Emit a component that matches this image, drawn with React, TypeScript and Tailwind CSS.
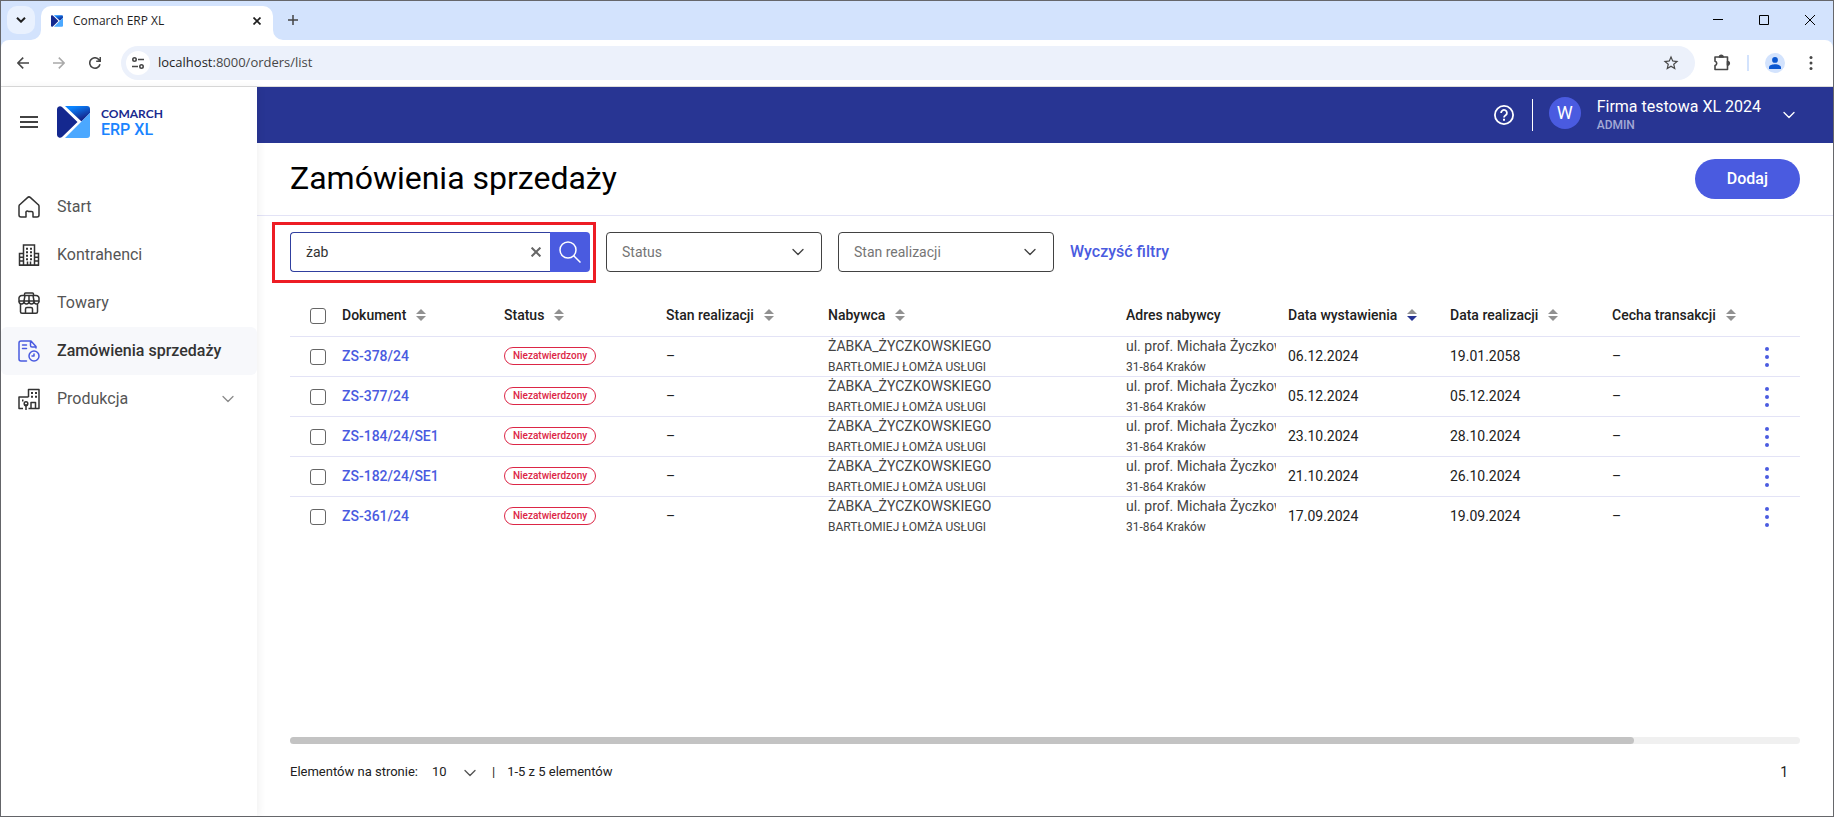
import React, { useState } from "react";
import { ChevronDown } from "lucide-react";

type IconProps = { className?: string };

type Order = {
  id: string;
  issued: string;
  due: string;
};

const orders: Order[] = [
  { id: "ZS-378/24", issued: "06.12.2024", due: "19.01.2058" },
  { id: "ZS-377/24", issued: "05.12.2024", due: "05.12.2024" },
  { id: "ZS-184/24/SE1", issued: "23.10.2024", due: "28.10.2024" },
  { id: "ZS-182/24/SE1", issued: "21.10.2024", due: "26.10.2024" },
  { id: "ZS-361/24", issued: "17.09.2024", due: "19.09.2024" },
];

const columns = [
  { label: "Dokument", sort: "none", width: "w-[162px]" },
  { label: "Status", sort: "none", width: "w-[162px]" },
  { label: "Stan realizacji", sort: "none", width: "w-[162px]" },
  { label: "Nabywca", sort: "none", width: "w-[298px]" },
  { label: "Adres nabywcy", sort: "", width: "w-[162px]" },
  { label: "Data wystawienia", sort: "desc", width: "w-[162px]" },
  { label: "Data realizacji", sort: "none", width: "w-[162px]" },
  { label: "Cecha transakcji", sort: "none", width: "" },
];

const LogoMark = ({ className }: IconProps) => (
  <svg viewBox="0 0 33 32" className={className} aria-hidden="true">
    <defs>
      <linearGradient id="logoTop" x1="0" y1="0" x2="0.6" y2="1">
        <stop offset="0.2" stopColor="#0a84ff" />
        <stop offset="0.9" stopColor="#14288f" />
      </linearGradient>
    </defs>
    <path d="M8 0h22a3 3 0 0 1 3 3v4L24.500 15.500z" fill="url(#logoTop)" />
    <path d="M33 7v22a3 3 0 0 1-3 3H8l16.500-16.500z" fill="#4ba8ff" />
    <path d="M0 3a3 3 0 0 1 5-2l15.500 15L5 31a3 3 0 0 1-5-2z" fill="#14288f" />
  </svg>
);

const HomeIcon = () => (
  <svg viewBox="0 0 22 22" className="size-[22px]" fill="none" stroke="currentColor" strokeWidth="1.5" strokeLinejoin="round">
    <path d="M1 10.200c0-.6.2-1.100.7-1.500l7.800-7.100a2.200 2.200 0 0 1 3 0l7.800 7.100c.5.400.7.900.7 1.500V19a2 2 0 0 1-2 2h-4v-4a1.500 1.500 0 0 0-1.500-1.500h-3A1.500 1.500 0 0 0 8 17v4H3a2 2 0 0 1-2-2z" />
  </svg>
);

const OfficeIcon = () => (
  <svg viewBox="0 0 22 22" className="size-[22px]" fill="none" stroke="currentColor" strokeWidth="1.5">
    <path d="M5.500 21V1h11v20M5.500 9.500h-4V21h19V9.500h-4M1 21.200h20" />
    <path d="M8 4.800h2M12 4.800h2M8 8.300h2M12 8.300h2M8 11.800h2M12 11.800h2M8 15.300h2M12 15.300h2" strokeWidth="2" />
    <path d="M1.500 13.300h4M1.500 17h4M16.500 13.300h4M16.500 17h4M9.500 21v-3.500M12.500 21v-3.500" />
  </svg>
);

const StoreIcon = () => (
  <svg viewBox="0 0 22 22" className="size-[22px]" fill="none" stroke="currentColor" strokeWidth="1.5" strokeLinejoin="round">
    <path d="M6.500 3.500V2a1 1 0 0 1 1-1h7a1 1 0 0 1 1 1v1.500M4 3.500h14a3 3 0 0 1 3 3.500v2H1V7a3 3 0 0 1 3-3.500zM6 9l1-5.500M16 9l-1-5.500M11 3.500V10" />
    <path d="M1 9a2.500 3 0 0 0 5 0 2.500 3 0 0 0 5 0 2.500 3 0 0 0 5 0 2.500 3 0 0 0 5 0" />
    <path d="M2.500 12V19.700a1.500 1.500 0 0 0 1.500 1.500h14a1.500 1.500 0 0 0 1.500-1.500V12M7.500 21v-4a1.500 1.500 0 0 1 1.500-1.500h4a1.500 1.500 0 0 1 1.500 1.500v4" />
  </svg>
);

const OrdersIcon = () => (
  <svg viewBox="0 0 22 22" className="size-[22px]" fill="none" stroke="#4a5be0" strokeWidth="1.5" strokeLinecap="round" strokeLinejoin="round">
    <path d="M8.500 21H3a2 2 0 0 1-2-2V3a2 2 0 0 1 2-2h10l5 5.500V8M12.500 1v4.500a1.500 1.500 0 0 0 1.500 1.500h4" />
    <path d="M4.500 5h4M4.500 8.500h4" />
    <circle cx="16" cy="16" r="5" />
    <path d="M16 14v2h-2" />
  </svg>
);

const FactoryIcon = () => (
  <svg viewBox="0 0 22 22" className="size-[22px]" fill="none" stroke="currentColor" strokeWidth="1.5" strokeLinejoin="round">
    <path d="M10.500 9V1.500h10.500V20.500H10.500M10.500 9H1v11.500h4" />
    <path d="M13 5h2M17 5h2M13 8.800h2M17 8.800h2M4 12.500h1.500" strokeWidth="2" />
    <path d="M8 16v6" />
    <path d="M6.200 15.500a1.800 1.800 0 0 1 3.600 0c0 1.200-.8 2.200-1.800 2.200s-1.800-1-1.800-2.200zM13 20.500v-6h4.500v6" />
  </svg>
);

const SortIcon = ({ active }: { active: boolean }) => (
  <svg viewBox="0 0 10 12" className="h-3 w-2.5 shrink-0" aria-hidden="true">
    <path d="M5 0l5 5H0z" fill="#919191" />
    <path d="M5 12l5-5H0z" fill={active ? "#283593" : "#919191"} />
  </svg>
);

const navItems = [
  { label: "Start", icon: <HomeIcon /> },
  { label: "Kontrahenci", icon: <OfficeIcon /> },
  { label: "Towary", icon: <StoreIcon /> },
  { label: "Zamówienia sprzedaży", icon: <OrdersIcon />, active: true },
  { label: "Produkcja", icon: <FactoryIcon />, expandable: true },
];

const BrowserChrome = () => (
  <div className="font-['Open_Sans',sans-serif] text-[#1f1f1f]">
    {/* Tab strip */}
    <div className="flex h-[39px] items-end bg-[#d3e3fd]">
      <button aria-label="Szukaj kart" className="mb-1.5 ml-1.5 flex size-7 items-center justify-center rounded-[10px] bg-[#e9f1fe]">
        <svg viewBox="0 0 10 6" className="h-1.5 w-2.5" fill="none" stroke="currentColor" strokeWidth="2">
          <path d="M1 .7l4 4 4-4" />
        </svg>
      </button>
      <div className="relative ml-1.5 flex h-[34px] w-[232px] items-center rounded-t-[10px] bg-white pr-3 pl-2.5">
        <svg viewBox="0 0 10 10" className="absolute bottom-0 -left-2.5 size-2.5" fill="white">
          <path d="M10 0v10H0A10 10 0 0 0 10 0" />
        </svg>
        <svg viewBox="0 0 10 10" className="absolute -right-2.5 bottom-0 size-2.5" fill="white">
          <path d="M0 0v10h10A10 10 0 0 1 0 0" />
        </svg>
        <LogoMark className="mb-1 h-3 w-3" />
        <span className="mb-1 ml-2.5 flex-1 text-xs">Comarch ERP XL</span>
        <button aria-label="Zamknij kartę" className="mb-1">
          <svg viewBox="0 0 8 8" className="size-2" fill="none" stroke="currentColor" strokeWidth="1.7">
            <path d="M.5.500l7 7M7.500.500l-7 7" />
          </svg>
        </button>
      </div>
      <button aria-label="Nowa karta" className="mb-[15px] ml-[15px]">
        <svg viewBox="0 0 10 10" className="size-2.5" fill="none" stroke="#444" strokeWidth="1.5">
          <path d="M5 0v10M0 5h10" />
        </svg>
      </button>
      <div className="mr-[18px] mb-[15px] ml-auto flex items-center gap-9 text-black">
        <button aria-label="Minimalizuj">
          <svg viewBox="0 0 10 10" className="size-2.5" stroke="currentColor">
            <path d="M0 4.500h10" />
          </svg>
        </button>
        <button aria-label="Maksymalizuj">
          <svg viewBox="0 0 10 10" className="size-2.5" fill="none" stroke="currentColor">
            <path d="M.5.500h9v9h-9z" />
          </svg>
        </button>
        <button aria-label="Zamknij">
          <svg viewBox="0 0 10 10" className="size-2.5" fill="none" stroke="currentColor">
            <path d="M0 0l10 10M10 0L0 10" />
          </svg>
        </button>
      </div>
    </div>

    {/* Address bar */}
    <div className="bg-[#d3e3fd]">
      <div className="flex h-[47px] items-center rounded-t-lg border-b border-[#dcdcdc] bg-white pr-5 pl-4 text-[#474747]">
        <button aria-label="Wstecz">
          <svg viewBox="0 0 12 12" className="size-3" fill="none" stroke="currentColor" strokeWidth="1.6">
            <path d="M12 6H1M6.200.600L.8 6l5.400 5.400" />
          </svg>
        </button>
        <button aria-label="Dalej" className="ml-6 text-[#a9a9a9]">
          <svg viewBox="0 0 12 12" className="size-3" fill="none" stroke="currentColor" strokeWidth="1.6">
            <path d="M0 6h11M5.800.600L11.200 6l-5.400 5.400" />
          </svg>
        </button>
        <button aria-label="Odśwież" className="ml-6">
          <svg viewBox="0 0 12 12" className="size-3" fill="none" stroke="currentColor" strokeWidth="1.6">
            <path d="M11 7.200A5.200 5.200 0 1 1 10 2.700l1.200 1.500M11.300 0v4.300H7.200" />
          </svg>
        </button>
        <div className="ml-5 flex h-[34px] flex-1 items-center rounded-full bg-[#ecf1fb] pr-[15px] pl-[5px]">
          <span className="flex size-6 items-center justify-center rounded-full bg-white">
            <svg viewBox="0 0 12 12" className="size-3" fill="none" stroke="currentColor" strokeWidth="1.6">
              <circle cx="2.500" cy="2.500" r="1.700" />
              <path d="M6 2.500h6M0 9.500h6" />
              <circle cx="9.500" cy="9.500" r="1.700" />
            </svg>
          </span>
          <span className="ml-2 text-[13px] text-[#474747]">
            <span className="text-[#1f1f1f]">localhost</span>:8000/orders/list
          </span>
          <button aria-label="Dodaj do zakładek" className="ml-auto">
            <svg viewBox="0 0 24 24" className="size-[18px]" fill="currentColor">
              <path d="M22 9.240l-7.190-.62L12 2 9.190 8.630 2 9.240l5.460 4.730L5.820 21 12 17.270 18.180 21l-1.630-7.030zM12 15.400l-3.760 2.270 1-4.280-3.320-2.880 4.380-.38L12 6.100l1.710 4.040 4.380.38-3.320 2.880 1 4.280z" />
            </svg>
          </button>
        </div>
        <button aria-label="Rozszerzenia" className="ml-[18px]">
          <svg viewBox="0 0 18 18" className="size-[18px]" fill="none" stroke="currentColor" strokeWidth="1.600" strokeLinejoin="round">
            <path d="M2 3h12.500v12.500H2v-4a2.200 2.200 0 0 0 0-4.300z" />
            <path d="M6.500 3a1.800 1.800 0 0 1 3.600 0zM14.500 7.500a1.800 1.800 0 0 1 0 3.600z" fill="currentColor" />
          </svg>
        </button>
        <span className="ml-4 h-4 w-0.5 bg-[#d3e3fd]" />
        <button aria-label="Profil" className="ml-4 flex size-5 items-center justify-center rounded-full bg-[#d3e3fd]">
          <svg viewBox="0 0 12 12" className="size-3" fill="#0b57d0">
            <circle cx="6" cy="2.900" r="2.900" />
            <path d="M0 12V10.200C0 8 4 7.200 6 7.200s6 .8 6 3V12z" />
          </svg>
        </button>
        <button aria-label="Menu" className="ml-6">
          <svg viewBox="0 0 4 14" className="h-3.5 w-1" fill="currentColor">
            <circle cx="2" cy="1.600" r="1.500" />
            <circle cx="2" cy="7" r="1.500" />
            <circle cx="2" cy="12.400" r="1.500" />
          </svg>
        </button>
      </div>
    </div>
  </div>
);

const Sidebar = () => (
  <aside className="z-10 w-64 shrink-0 bg-white shadow-[2px_0_8px_rgba(0,0,0,0.06)]">
    <div className="flex h-[70px] items-center pl-[19px]">
      <button aria-label="Menu główne">
        <svg viewBox="0 0 18 12" className="h-3 w-[18px]" stroke="#424242" strokeWidth="2">
          <path d="M0 1h18M0 6h18M0 11h18" />
        </svg>
      </button>
      <LogoMark className="ml-[19px] h-8 w-[33px]" />
      <div className="ml-[11px] font-['Lato',sans-serif]">
        <div className="text-xs leading-4 font-bold text-[#1a2b8f]">COMARCH</div>
        <div className="font-['Roboto',sans-serif] text-base leading-4 font-medium text-[#1a84ff]">ERP XL</div>
      </div>
    </div>
    <nav className="mt-[26px]">
      {navItems.map((item) => (
        <a
          key={item.label}
          href="#"
          className={`flex h-12 items-center rounded-md pr-[19px] pl-[17px] ${
            item.active ? "bg-[#f7f8fb] font-medium text-[#333]" : "text-[#555]"
          }`}
        >
          <span className="text-[#333]">{item.icon}</span>
          <span className="ml-[17px] flex-1">{item.label}</span>
          {item.expandable && <ChevronDown size={20} strokeWidth={1.5} className="text-[#8a8a8a]" />}
        </a>
      ))}
    </nav>
  </aside>
);

const TopBar = () => (
  <header className="flex h-14 items-center bg-[#283593] pr-[34px] text-white">
    <button aria-label="Pomoc" className="ml-auto">
      <svg viewBox="0 0 20 20" className="size-5" fill="none" stroke="currentColor" strokeWidth="1.800">
        <circle cx="10" cy="10" r="9.100" />
        <path d="M7.100 8a2.900 2.900 0 1 1 4.500 2.300c-1 .7-1.600 1.100-1.600 2.200" />
        <path d="M10 13.800v2" strokeWidth="2" />
      </svg>
    </button>
    <span className="ml-[18px] h-8 w-px bg-white" />
    <span className="mb-1 ml-4 flex size-8 items-center justify-center rounded-full bg-[#4a5be0] text-lg">W</span>
    <div className="ml-4">
      <div className="text-base leading-5">Firma testowa XL 2024</div>
      <div className="text-xs leading-4 font-medium text-[#a3a9d6]">ADMIN</div>
    </div>
    <button aria-label="Konto" className="ml-[18px]">
      <ChevronDown size={20} strokeWidth={1.6} />
    </button>
  </header>
);

const FilterSelect = ({ label }: { label: string }) => (
  <div className="relative">
    <select
      aria-label={label}
      className="h-10 w-[216px] appearance-none rounded border border-[#424242] bg-white px-[15px] text-sm text-[#757575] outline-none"
    >
      <option>{label}</option>
    </select>
    <ChevronDown size={20} strokeWidth={1.6} className="pointer-events-none absolute top-2.5 right-3.5 text-[#424242]" />
  </div>
);

const App: React.FC = () => {
  const [query, setQuery] = useState("żab");

  return (
    <div className="flex min-h-screen flex-col border border-[#66676b] bg-white font-['Roboto',sans-serif]">
      <BrowserChrome />
      <div className="flex flex-1">
        <Sidebar />
        <main className="flex min-w-0 flex-1 flex-col">
          <TopBar />

          {/* Page title */}
          <div className="flex h-[73px] items-center justify-between border-b border-[#e3e3f6] px-[33px]">
            <h1 className="pb-0.5 text-[32px] leading-10 text-black">Zamówienia sprzedaży</h1>
            <button className="h-10 rounded-full bg-[#4a5be0] px-8 text-base font-medium text-white">Dodaj</button>
          </div>

          <div className="flex flex-1 flex-col px-[33px] pt-4">
            {/* Filters */}
            <div className="flex items-center gap-4">
              <div className="relative flex">
                <input
                  type="text"
                  aria-label="Szukaj"
                  value={query}
                  onChange={(e) => setQuery(e.target.value)}
                  className="h-10 w-[260px] rounded-l border border-r-0 border-[#303f9f] pr-8 pl-[15px] text-sm text-[#333] outline-none"
                />
                <button aria-label="Wyczyść" onClick={() => setQuery("")} className="absolute top-[15px] right-[49px]">
                  <svg viewBox="0 0 10 10" className="size-2.5" fill="none" stroke="#666" strokeWidth="2">
                    <path d="M.6.600l8.800 8.800M9.400.600L.6 9.400" />
                  </svg>
                </button>
                <button aria-label="Szukaj" className="flex size-10 items-center justify-center rounded-r bg-[#4a5be0]">
                  <svg viewBox="0 0 22 22" className="size-[22px]" fill="none" stroke="white" strokeWidth="1.500">
                    <circle cx="9" cy="9" r="8" />
                    <path d="M14.700 14.700l6.800 6.800" />
                  </svg>
                </button>
                <div className="pointer-events-none absolute -top-2.5 -right-1.5 -bottom-[11px] -left-[18px] border-3 border-[#ed1c24]" />
              </div>
              <FilterSelect label="Status" />
              <FilterSelect label="Stan realizacji" />
              <button onClick={() => setQuery("")} className="text-base font-medium text-[#4a5be0]">
                Wyczyść filtry
              </button>
            </div>

            {/* Orders */}
            <table className="mt-5 w-full table-fixed border-collapse text-left text-sm text-[#212121]">
              <thead>
                <tr className="h-11 border-b border-[#e3e3f6]">
                  <th className="w-[52px] pl-5">
                    <input type="checkbox" aria-label="Zaznacz wszystkie" className="mt-1 block size-4 appearance-none rounded-[3px] border border-[#666]" />
                  </th>
                  {columns.map((col) => (
                    <th key={col.label} className={`pt-0.5 font-medium whitespace-nowrap ${col.width}`}>
                      <span className="flex items-center gap-2.5">
                        {col.label}
                        {col.sort && <SortIcon active={col.sort === "desc"} />}
                      </span>
                    </th>
                  ))}
                  <th className="w-[66px]" />
                </tr>
              </thead>
              <tbody>
                {orders.map((order) => (
                  <tr key={order.id} className="h-10 border-b border-[#e3e3f6] last:border-b-0">
                    <td className="pl-5">
                      <input type="checkbox" aria-label={order.id} className="mt-0.5 block size-4 appearance-none rounded-[3px] border border-[#666]" />
                    </td>
                    <td>
                      <a href="#" className="font-medium text-[#4a5be0]">{order.id}</a>
                    </td>
                    <td>
                      <span className="flex h-[18px] w-[92px] items-center justify-center rounded-full border border-[#dc2646] text-[10px] font-medium text-[#dc2646]">
                        Niezatwierdzony
                      </span>
                    </td>
                    <td>–</td>
                    <td className="pr-3 text-[#444]">
                      <div className="leading-[18px]">ŻABKA_ŻYCZKOWSKIEGO</div>
                      <div className="mt-1 text-xs leading-4">BARTŁOMIEJ ŁOMŻA USŁUGI</div>
                    </td>
                    <td className="pr-3 text-[#444]">
                      <div className="overflow-hidden leading-[18px] whitespace-nowrap">ul. prof. Michała Życzkowskiego</div>
                      <div className="mt-1 text-xs leading-4">31-864 Kraków</div>
                    </td>
                    <td>{order.issued}</td>
                    <td>{order.due}</td>
                    <td>–</td>
                    <td>
                      <button aria-label="Akcje" className="mx-auto mt-0.5 block">
                        <svg viewBox="0 0 4 20" className="h-5 w-1" fill="#4a5be0">
                          <circle cx="2" cy="2" r="2" />
                          <circle cx="2" cy="10" r="2" />
                          <circle cx="2" cy="18" r="2" />
                        </svg>
                      </button>
                    </td>
                  </tr>
                ))}
              </tbody>
            </table>

            <div className="mt-auto h-[7px] rounded-sm bg-[#f0f0f0]">
              <div className="h-full w-[89%] rounded-sm bg-[#c3c3c3]" />
            </div>

            {/* Pagination */}
            <div className="mb-[34px] flex h-[38px] items-end text-[13px] leading-5 text-[#212121]">
              <label htmlFor="page-size">Elementów na stronie:</label>
              <div className="relative ml-3.5">
                <select id="page-size" className="block w-12 appearance-none bg-transparent outline-none">
                  <option>10</option>
                </select>
                <ChevronDown size={20} strokeWidth={1.6} className="pointer-events-none absolute top-px right-0 text-[#555]" />
              </div>
              <span className="ml-3">|</span>
              <span className="ml-3">1-5 z 5 elementów</span>
              <span className="mr-3 ml-auto text-sm leading-5">1</span>
            </div>
          </div>
        </main>
      </div>
    </div>
  );
};

export default App;
